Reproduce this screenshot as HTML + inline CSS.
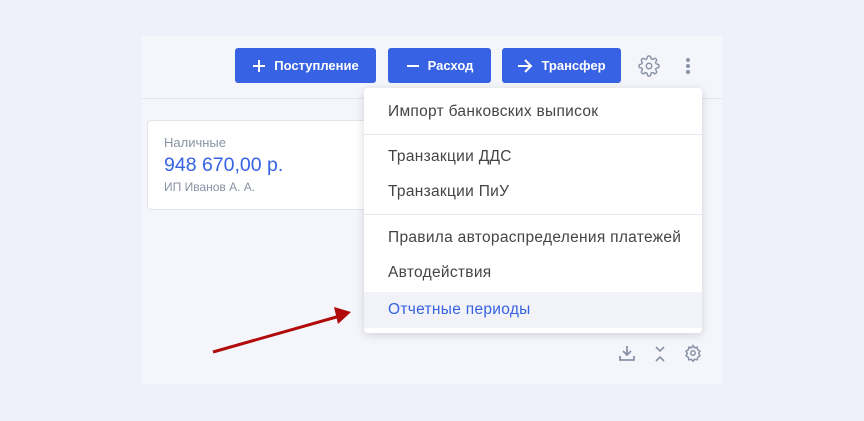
<html><head><style>
body{margin:0;width:864px;height:421px;background:#eef0fa;font-family:"Liberation Sans",sans-serif;position:relative;overflow:hidden}
.panel{position:absolute;left:142px;top:36px;width:580px;height:348px;background:#f5f6fb}
.hd{position:absolute;left:0;top:62px;width:580px;height:1px;background:#e2e4ee}
.btn{position:absolute;top:12px;height:35px;background:#3662e3;border-radius:3px;color:#fff;font-size:13px;font-weight:bold;display:flex;align-items:center;justify-content:center;gap:8px}
.card{position:absolute;left:5px;top:84px;width:240px;height:88px;background:#fff;border:1px solid #e3e5ee;border-radius:4px}
.menu{position:absolute;left:364px;top:88px;width:338px;height:245px;background:#fff;border-radius:4px;box-shadow:0 2px 10px rgba(0,0,0,.15)}
.it{position:absolute;left:24px;font-size:15.5px;letter-spacing:.3px;color:#444}
.dv{position:absolute;left:0;width:338px;height:1px;background:#e6e7ee}
</style></head><body>
<div class="panel">
<div class="hd"></div>
<div class="btn" style="left:93px;width:141px"><svg width="14" height="14" viewBox="0 0 14 14" stroke="#fff" stroke-width="2"><path d="M7 1v12M1 7h12"/></svg>Поступление</div>
<div class="btn" style="left:246px;width:103px"><svg width="14" height="14" viewBox="0 0 14 14" stroke="#fff" stroke-width="2"><path d="M1 7h12"/></svg>Расход</div>
<div class="btn" style="left:360px;width:119px"><svg width="16" height="14" viewBox="0 0 16 14" fill="none" stroke="#fff" stroke-width="2"><path d="M1 7h13M8 1l6 6-6 6"/></svg>Трансфер</div>
<svg style="position:absolute;left:496px;top:19px" width="22" height="22" viewBox="0 0 24 24" fill="none" stroke="#8a93a6" stroke-width="1.6"><circle cx="12" cy="12" r="3"/><path d="M19.4 15a1.65 1.65 0 0 0 .33 1.820l.06.06a2 2 0 1 1-2.83 2.83l-.06-.06a1.65 1.65 0 0 0-1.82-.33 1.65 1.65 0 0 0-1 1.51V21a2 2 0 1 1-4 0v-.09A1.650 1.650 0 0 0 9 19.4a1.65 1.65 0 0 0-1.82.33l-.06.06a2 2 0 1 1-2.83-2.83l.06-.06A1.65 1.65 0 0 0 4.68 15a1.65 1.65 0 0 0-1.51-1H3a2 2 0 1 1 0-4h.09A1.65 1.65 0 0 0 4.6 9a1.65 1.65 0 0 0-.33-1.82l-.06-.06a2 2 0 1 1 2.83-2.83l.06.06A1.65 1.65 0 0 0 9 4.68a1.65 1.65 0 0 0 1-1.51V3a2 2 0 1 1 4 0v.09a1.65 1.65 0 0 0 1 1.51 1.65 1.65 0 0 0 1.82-.33l.06-.06a2 2 0 1 1 2.83 2.83l-.06.06A1.65 1.65 0 0 0 19.4 9a1.65 1.65 0 0 0 1.51 1H21a2 2 0 1 1 0 4h-.09a1.65 1.65 0 0 0-1.510 1z"/></svg>
<svg style="position:absolute;left:543px;top:21px" width="6" height="18"><circle cx="3" cy="3" r="2" fill="#8a93a6"/><circle cx="3" cy="9" r="2" fill="#8a93a6"/><circle cx="3" cy="15" r="2" fill="#8a93a6"/></svg>
<div class="card">
<div style="position:absolute;left:16px;top:14px;font-size:13px;color:#8a93a6">Наличные</div>
<div style="position:absolute;left:16px;top:33px;font-size:19.5px;color:#3662e3">948 670,00 р.</div>
<div style="position:absolute;left:16px;top:59px;font-size:12px;color:#8a93a6">ИП Иванов А. А.</div>
</div>
<svg style="position:absolute;left:476px;top:308px" width="18" height="18" viewBox="0 0 18 18" fill="none" stroke="#8a93a6" stroke-width="1.8"><path d="M9 2v9M5 7l4 4 4-4M2 12v4h14v-4"/></svg>
<svg style="position:absolute;left:511px;top:309px" width="14" height="18" viewBox="0 0 14 18" fill="none" stroke="#8a93a6" stroke-width="1.6"><path d="M3 2l4 4 4-4M3 16l4-4 4 4"/></svg>
<svg style="position:absolute;left:542px;top:308px" width="18" height="18" viewBox="0 0 24 24" fill="none" stroke="#8a93a6" stroke-width="2"><circle cx="12" cy="12" r="3"/><path d="M12 2l2 3 3.5-.8.8 3.5 3 2-1.8 3 1.8 3-3 2-.8 3.5-3.5-.8-2 3-2-3-3.5.8-.8-3.5-3-2 1.8-3-1.8-3 3-2 .8-3.5 3.5.8z"/></svg>
</div>
<div class="menu">
<div class="it" style="top:15px">Импорт банковских выписок</div>
<div class="dv" style="top:46px"></div>
<div class="it" style="top:60px">Транзакции ДДС</div>
<div class="it" style="top:95px">Транзакции ПиУ</div>
<div class="dv" style="top:126px"></div>
<div class="it" style="top:141px">Правила автораспределения платежей</div>
<div class="it" style="top:176px">Автодействия</div>
<div style="position:absolute;left:0;top:204px;width:338px;height:36px;background:#f2f3f8"></div>
<div class="it" style="top:213px;color:#3662e3">Отчетные периоды</div>
</div>
<svg style="position:absolute;left:0;top:0" width="864" height="421"><line x1="213" y1="352" x2="340" y2="316" stroke="#b00a0a" stroke-width="3"/><polygon points="351,312 334,307 338,324" fill="#b00a0a"/></svg>
</body></html>
